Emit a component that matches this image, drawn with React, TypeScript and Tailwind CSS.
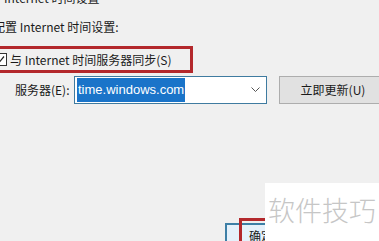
import React from 'react';

const App = () => {
  return (
    <div className="w-[379px] h-[241px] bg-[#f0f0f0] overflow-hidden relative text-[12px] text-[#1a1a1a] font-['Noto_Sans_CJK_SC',sans-serif] flex flex-col">
      {/* titulo cortado no topo */}
      <div className="h-[6px] overflow-hidden">
        <div className="-mt-[10px] pl-[4px] leading-[16px]">Internet 时间设置</div>
      </div>

      <div className="mt-[13px] -ml-[7px] leading-[16px]">配置 Internet 时间设置:</div>

      {/* linha do checkbox com destaque vermelho */}
      <div className="mt-[11px] -ml-[8px] w-[201px] h-[27px] border-[3px] border-[#b3282c] flex items-center gap-[3px] shrink-0">
        <div className="ml-[-1px] w-[13px] h-[13px] border border-[#333] bg-white flex items-center justify-center">
          <svg width="9" height="9" viewBox="0 0 9 9">
            <path d="M1 4.5 L3.5 7 L8 1.5" fill="none" stroke="#222" strokeWidth="1.2" />
          </svg>
        </div>
        <span className="leading-[16px]">与 Internet 时间服务器同步(S)</span>
      </div>

      {/* servidor */}
      <div className="mt-[3px] flex items-center h-[28px] shrink-0">
        <span className="ml-[15px] w-[59px] shrink-0 leading-[16px]">服务器(E):</span>
        <div className="w-[193px] h-[28px] shrink-0 border border-[#3f7ba0] bg-white flex items-center px-[2px]">
          <span className="bg-[#1a74c9] text-white h-[24px] leading-[24px] px-[1px] text-[13px] font-['Liberation_Sans',sans-serif]">time.windows.com</span>
          <svg className="ml-auto mr-[4px]" width="9" height="6" viewBox="0 0 9 6">
            <path d="M0.5 0.5 L4.5 4.5 L8.5 0.5" fill="none" stroke="#555" strokeWidth="1" />
          </svg>
        </div>
        <div className="ml-[12px] w-[108px] h-[28px] border border-[#adadad] bg-[#e1e1e1] flex items-center justify-center shrink-0">
          立即更新(U)
        </div>
      </div>

      {/* botao OK no rodape */}
      <div className="mt-auto flex justify-end pr-[76px]">
        <div className="relative w-[78px] h-[18px] border-2 border-b-0 border-[#3d7fa6] bg-[#e5f1fb] pl-[22px] pt-[3px] leading-[16px]">
          确定
          <div className="absolute left-[12px] -top-[7px] w-[70px] h-[30px] border-[3px] border-[#b3282c]" />
        </div>
      </div>

      {/* marca d'agua */}
      <div className="absolute left-[265px] top-[183px] w-[114px] h-[58px] bg-white flex items-center justify-center">
        <span className="whitespace-nowrap text-[27px] text-[#c6c6c6] leading-none -mt-[6px] font-['Noto_Sans_CJK_SC',sans-serif] font-light">软件技巧</span>
      </div>
    </div>
  );
};

export default App;
